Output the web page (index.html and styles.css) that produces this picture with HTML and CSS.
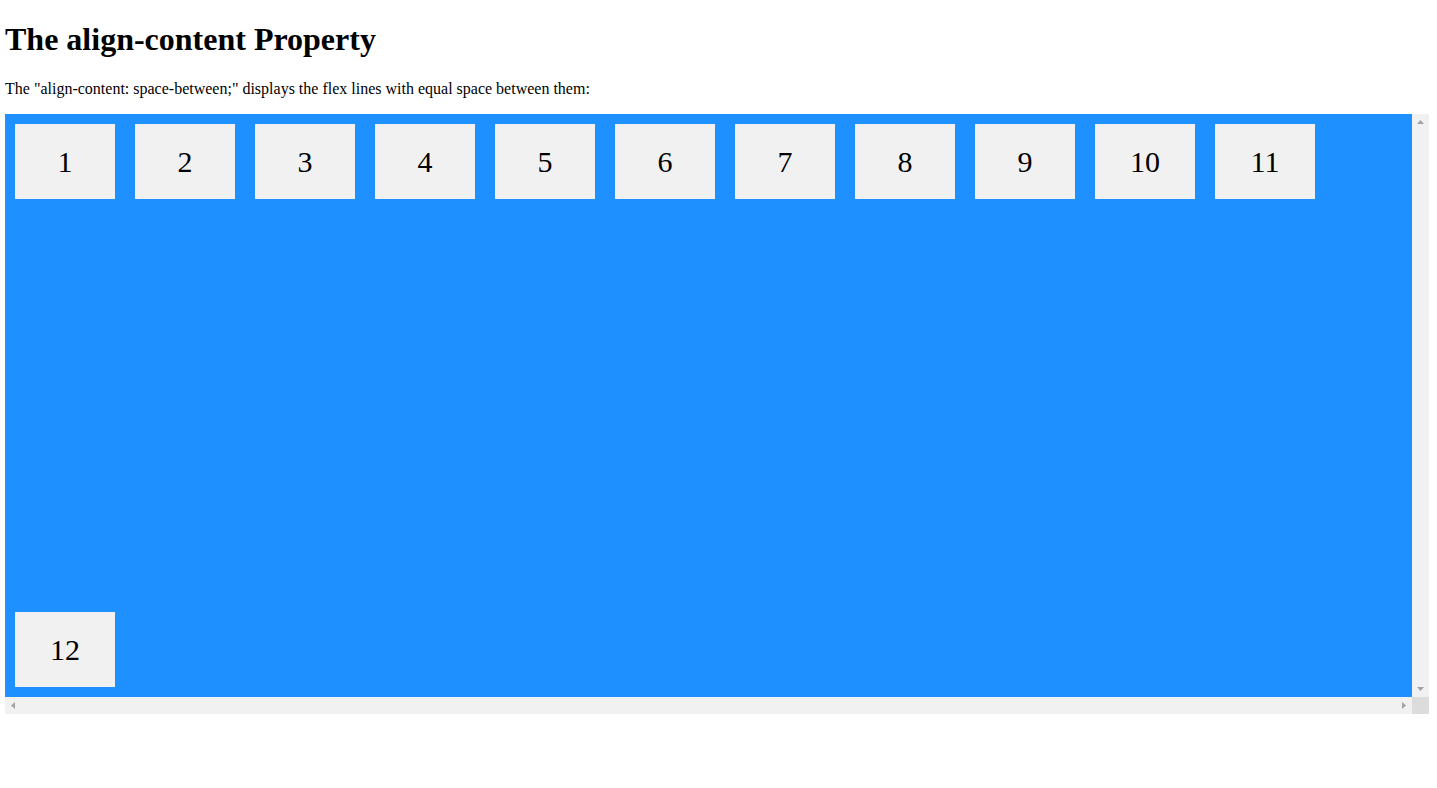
FILE: index.html
```html
<!DOCTYPE html>
<html>
<head>
<meta charset="utf-8">
<link rel="stylesheet" href="styles.css">
</head>
<body>
<h1>The align-content Property</h1>
<p>The "align-content: space-between;" displays the flex lines with equal space between them:</p>
<div class="frame">
  <div class="flex-container">
    <div>1</div>
    <div>2</div>
    <div>3</div>
    <div>4</div>
    <div>5</div>
    <div>6</div>
    <div>7</div>
    <div>8</div>
    <div>9</div>
    <div>10</div>
    <div>11</div>
    <div>12</div>
  </div>
  <div class="vbar">
    <svg class="arrow" width="17" height="17" viewBox="0 0 17 17"><polygon points="5,10 12,10 8.5,6" fill="#a3a3a3"/></svg>
    <svg class="arrow" width="17" height="17" viewBox="0 0 17 17"><polygon points="5,7 12,7 8.5,11" fill="#a3a3a3"/></svg>
  </div>
  <div class="hbar">
    <svg class="arrow" width="17" height="17" viewBox="0 0 17 17"><polygon points="10,5 10,12 6,8.5" fill="#a3a3a3"/></svg>
    <svg class="arrow" width="17" height="17" viewBox="0 0 17 17"><polygon points="7,5 7,12 11,8.5" fill="#a3a3a3"/></svg>
  </div>
  <div class="corner"></div>
</div>
</body>
</html>
```
FILE: styles.css
```css
body {
  margin: 0 5px;
  font-family: "Liberation Serif", "Times New Roman", serif;
  color: #000;
  background: #fff;
}
h1 {
  font-size: 32px;
  font-weight: bold;
  margin: 21.44px 0 21.44px 0;
  padding-top: 0;
}
p {
  font-size: 16px;
  margin: 16px 0;
}
.frame {
  width: 1424px;
  height: 600px;
  display: grid;
  grid-template-columns: 1fr 17px;
  grid-template-rows: 1fr 17px;
}
.flex-container {
  display: flex;
  flex-wrap: wrap;
  align-content: space-between;
  background-color: #1e90ff;
  overflow: hidden;
}
.flex-container > div {
  background-color: #f1f1f1;
  width: 100px;
  margin: 10px;
  text-align: center;
  line-height: 75px;
  font-size: 30px;
}
.vbar {
  background: #f1f1f1;
  display: flex;
  flex-direction: column;
  justify-content: space-between;
}
.hbar {
  background: #f1f1f1;
  display: flex;
  flex-direction: row;
  justify-content: space-between;
}
.corner {
  background: #dcdcdc;
}
.arrow {
  display: block;
}
```
